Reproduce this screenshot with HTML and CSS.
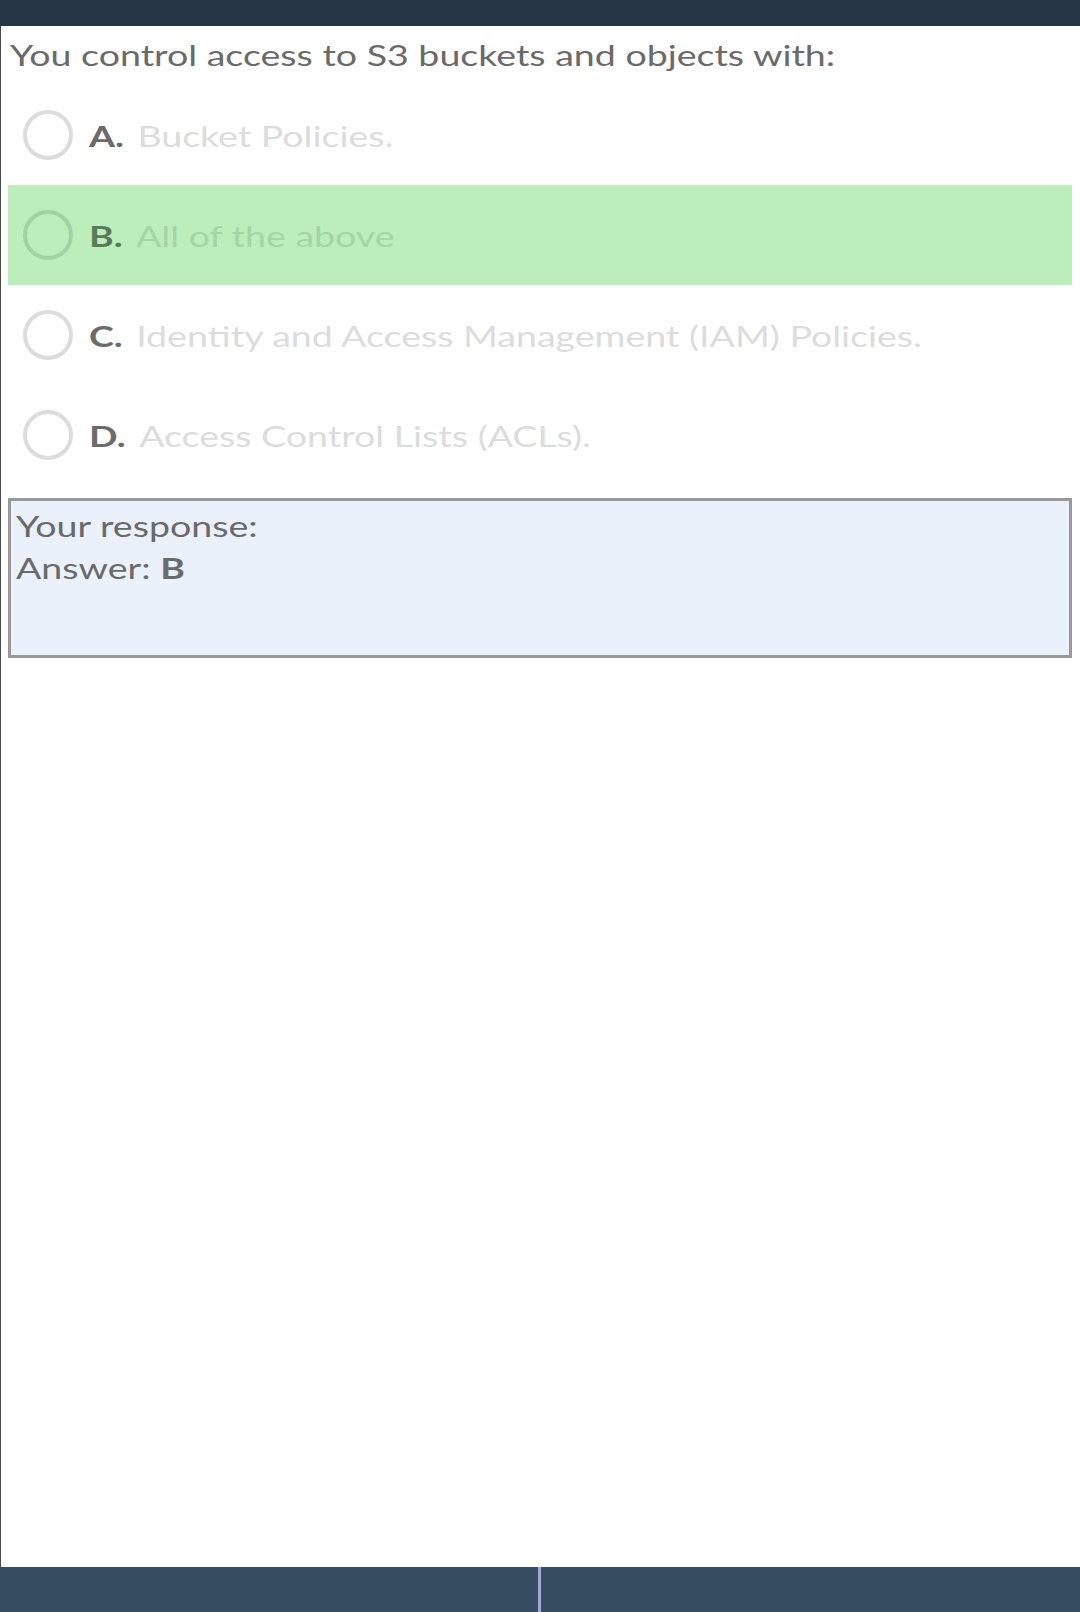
FILE: index.html
```html
<!DOCTYPE html>
<html lang="en">
<head>
<meta charset="utf-8">
<title>Quiz</title>
<link rel="stylesheet" href="styles.css">
</head>
<body>
<div class="page">
  <header class="topbar"></header>
  <main class="content">
    <p class="question"><span class="wide">You control access to S3 buckets and objects with:</span></p>
    <ul class="options">
      <li class="option">
        <span class="radio"></span>
        <span class="caption wide"><span class="label">A.</span><span class="text">Bucket Policies.</span></span>
      </li>
      <li class="option option-correct">
        <span class="radio"></span>
        <span class="caption wide"><span class="label">B.</span><span class="text">All of the above</span></span>
      </li>
      <li class="option">
        <span class="radio"></span>
        <span class="caption wide"><span class="label">C.</span><span class="text">Identity and Access Management (IAM) Policies.</span></span>
      </li>
      <li class="option">
        <span class="radio"></span>
        <span class="caption wide"><span class="label">D.</span><span class="text">Access Control Lists (ACLs).</span></span>
      </li>
    </ul>
    <div class="response">
      <div><span class="wide">Your response:</span></div>
      <div><span class="wide">Answer: <b>B</b></span></div>
    </div>
  </main>
  <footer class="bottombar">
    <div class="half half-left"></div>
    <div class="divider"></div>
    <div class="half"></div>
  </footer>
</div>
</body>
</html>
```
FILE: styles.css
```css
html, body {
  margin: 0;
  padding: 0;
  background: #ffffff;
}
body {
  font-family: Lato, "Open Sans", "Liberation Sans", sans-serif;
  font-size: 28px;
  color: #6a6a6a;
}
.page {
  width: 1080px;
  height: 1612px;
  display: flex;
  flex-direction: column;
  overflow: hidden;
}
.topbar {
  height: 26px;
  flex: 0 0 26px;
  background: #263646;
}
.content {
  flex: 1 1 auto;
  border-left: 1px solid #4a4a4a;
  padding: 0 8px 0 7px;
  box-sizing: border-box;
  overflow: hidden;
}
.wide {
  display: inline-block;
  white-space: nowrap;
  transform: scaleX(1.34);
  transform-origin: 0 50%;
}
.question {
  margin: 13px 0 12px 2px;
  line-height: 1.2;
  color: #6a6a6a;
}
.options {
  list-style: none;
  margin: 0;
  padding: 0;
}
.option {
  height: 100px;
  display: flex;
  align-items: center;
  padding-left: 15px;
  box-sizing: border-box;
  line-height: 1.2;
}
.radio {
  width: 50px;
  height: 50px;
  box-sizing: border-box;
  border: 4px solid #dcdcdc;
  border-radius: 50%;
  flex: 0 0 auto;
}
.caption {
  padding-top: 5px;
  margin-left: 16px;
}
.label {
  font-weight: 700;
  color: #6b6b6b;
}
.text {
  color: #dcdcdc;
  margin-left: 10px;
}
.option-correct {
  background: #bbeeba;
}
.option-correct .radio {
  border-color: #a2d2a3;
}
.option-correct .label {
  color: #5a7a5c;
}
.option-correct .text {
  color: #a5d4a5;
}
.response {
  margin-top: 13px;
  border: 3px solid #999999;
  background: #eaf1fa;
  padding: 4px 5px 66px 5px;
  line-height: 42px;
  color: #6a6a6a;
  overflow: hidden;
}
.response b {
  font-weight: 700;
  color: #6b6b6b;
}
.bottombar {
  height: 45px;
  flex: 0 0 45px;
  display: flex;
  background: #364c60;
}
.half {
  flex: 1 1 0;
}
.half-left {
  flex: 0 0 538px;
}
.divider {
  width: 3px;
  background: #a3a9d9;
}
```
